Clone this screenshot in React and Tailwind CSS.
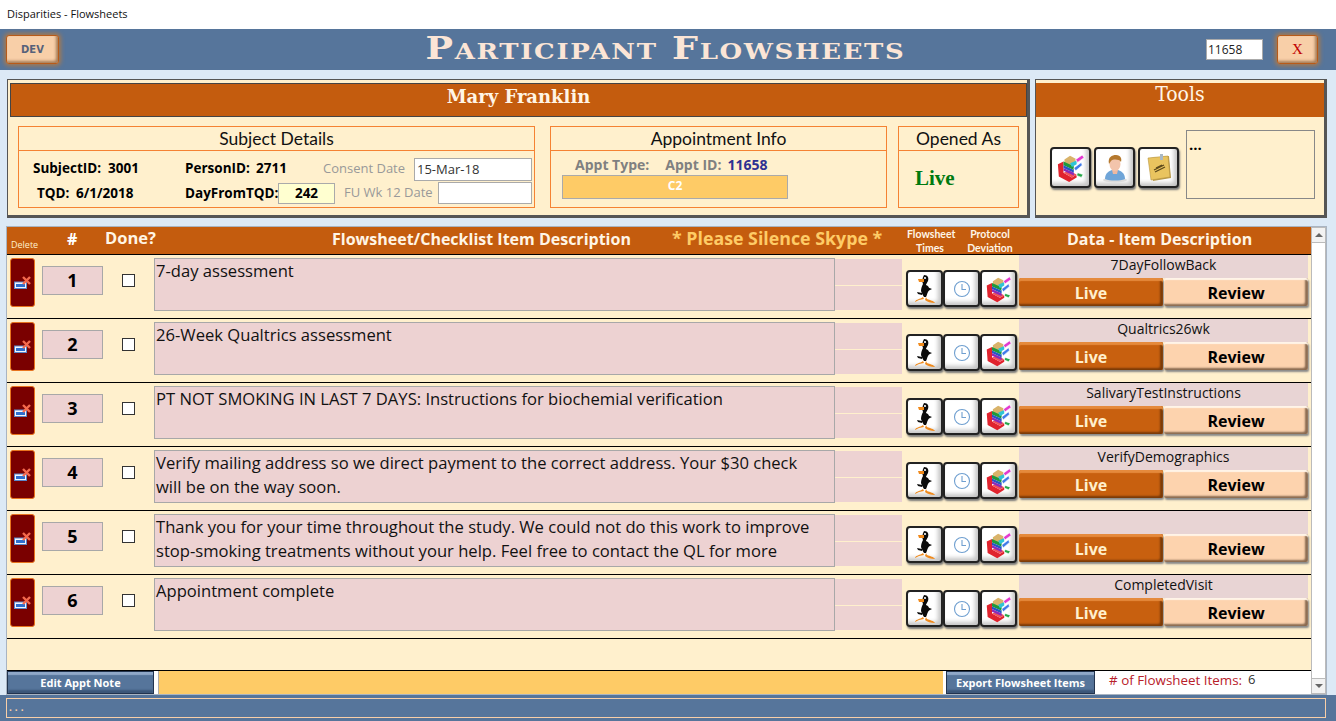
import React from "react";

/* ---------------- data ---------------- */

const ITEMS = [
  { n: 1, text: "7-day assessment", data: "7DayFollowBack" },
  { n: 2, text: "26-Week Qualtrics assessment", data: "Qualtrics26wk" },
  { n: 3, text: "PT NOT SMOKING IN LAST 7 DAYS: Instructions for biochemial verification", data: "SalivaryTestInstructions" },
  { n: 4, text: "Verify mailing address so we direct payment to the correct address. Your $30 check will be on the way soon.", data: "VerifyDemographics" },
  { n: 5, text: "Thank you for your time throughout the study. We could not do this work to improve stop-smoking treatments without your help. Feel free to contact the QL for more", data: "" },
  { n: 6, text: "Appointment complete", data: "CompletedVisit" },
];

/* ---------------- icons ---------------- */

const BooksIcon = ({ size = 28 }) => (
  <svg width={size} height={size} viewBox="0 0 32 32">
    <path d="M2 12 L8 9 L8 21 L17 26 L22 23 L22 26 L14 31 L3 25 Z" fill="#e0232e" />
    <path d="M8 21 L17 26 L22 23 L14 19 Z" fill="#f0505a" />
    <path d="M9 7 L15 3 L21 6 L21 11 L15 13 L9 11 Z" fill="#d9b36a" />
    <path d="M8 9 L19 14 L19 18 L8 13 Z" fill="#1f9a3c" />
    <path d="M8 13 L19 18 L19 21 L8 16 Z" fill="#2457c5" />
    <path d="M8 16 L19 21 L19 24 L8 19 Z" fill="#8a2bb8" />
    <path d="M15 11 L22 8 L22 12 L17 15 Z" fill="#2ec4d6" />
    <path d="M21 7 L28 2 L30 5 L23 10 Z" fill="#e23bd0" stroke="#fff" strokeWidth="0.7" />
    <path d="M19 16 L27 10 L28 13 L21 19 Z" fill="#3f7ae8" stroke="#fff" strokeWidth="0.7" />
    <path d="M23 21 L29 23 L27 26 L22 24 Z" fill="#27a84a" stroke="#fff" strokeWidth="0.7" />
  </svg>
);

const PersonIcon = () => (
  <svg width="28" height="30" viewBox="0 0 28 30">
    <ellipse cx="14" cy="27" rx="12" ry="2.5" fill="#dcdcdc" />
    <path d="M4 26 C4 20 8 18 11 17 L17 17 C20 18 24 20 24 26 C19 28 9 28 4 26 Z" fill="#6fa5d8" />
    <path d="M10.5 15 L17.5 15 L16 21 L12 21 Z" fill="#eeb8a0" />
    <ellipse cx="14" cy="11" rx="5.5" ry="7" fill="#f3c4ab" />
    <path d="M8 11 C6.5 4 11 2 15 2 C20 2 21 6 20 9 C18 6 12 6 10 8 Z" fill="#b5792e" />
  </svg>
);

const NotesIcon = () => (
  <svg width="28" height="30" viewBox="0 0 28 30">
    <path d="M5 5 L24 3 L26 25 L8 28 Z" fill="#b89a4c" />
    <path d="M3 5 L23 3 L25 24 L6 27 Z" fill="#e9c45f" stroke="#b8963f" strokeWidth="0.6" />
    <path d="M15 1 L18 1 L18 7 L15 7 Z" fill="#a9b8c4" />
    <path d="M9 17 L19 12 M10 19 L20 14 M11 15 L17 12" stroke="#5d4a1c" strokeWidth="1.3" />
  </svg>
);

const DuckIcon = () => (
  <svg width="24" height="30" viewBox="0 0 24 30">
    <path d="M11 1 C15 1 16 4 15 7 C14 9 13 10 13 11 C16 12 17 15 15 18 C14 20 14 21 13 23 L11 23 C10 21 9 20 8 17 C8 14 9 12 10 10 C9 8 9 4 11 1 Z" fill="#0b0b0b" />
    <circle cx="12" cy="4" r="1.1" fill="#fff" />
    <path d="M5 5 L11 5 L11 8 L6 8 Z" fill="#f08a1c" />
    <path d="M14 13 L19 15 L15 17 Z" fill="#0b0b0b" />
    <path d="M9 19 L4 18 L5 20 L9 21 Z" fill="#0b0b0b" />
    <path d="M10 23 L11 25 L6 26 L2 28 C2 26 6 25 8.5 24 Z" fill="#f08a1c" />
    <path d="M13 23 L14 25 C17 26 21 27 22 29 C18 29 14 28 12 26 Z" fill="#f08a1c" />
  </svg>
);

const ClockIcon = () => (
  <svg width="18" height="18" viewBox="0 0 18 18" fill="none" stroke="#6f9fd0" strokeWidth="1.1">
    <circle cx="9" cy="9" r="7.5" />
    <path d="M9 4 L9 9.5 L13 9.5" />
  </svg>
);

const DeleteIcon = () => (
  <svg width="18" height="14" viewBox="0 0 18 14">
    <rect x="0.5" y="6" width="12" height="6.5" fill="#f2f6fc" stroke="#5b86c8" />
    <rect x="2" y="8" width="9" height="3" fill="#2d6fd0" />
    <path d="M9 1 L16 8 M16 1 L9 8" stroke="#f56a4e" strokeWidth="2.4" />
  </svg>
);

/* ---------------- small pieces ---------------- */

const IconButton = ({ children, className = "w-[37px] h-[37px]" }) => (
  <div className={`${className} flex items-center justify-center bg-white rounded-[4px] border-2 border-[#222] shadow-[inset_-3px_-3px_4px_#c4c4c4,1px_2px_2px_#777]`}>
    {children}
  </div>
);

const BlueButton = ({ label, className }) => (
  <div className={`${className} h-[23px] flex items-center justify-center pt-[1px] bg-[#56759b] text-white font-['Open_Sans'] text-[11px] font-bold border border-[#22344f] shadow-[inset_0_3px_1px_#8fa8c8,inset_0_-3px_2px_#3c5678]`}>
    {label}
  </div>
);

const GroupBox = ({ title, className, children }) => (
  <div className={`${className} flex flex-col`}>
    <div className="h-[25px] pt-[1px] border border-[#f58233] flex items-center justify-center font-['Lato'] text-[17.5px] text-[#111]">
      {title}
    </div>
    <div className="h-[57px] border border-t-0 border-[#f58233] relative">{children}</div>
  </div>
);

const Row = ({ item }) => (
  <div className="h-[64px] border-t border-black flex items-start">
    <div className="ml-[3px] mt-[3px] w-[25px] h-[49px] bg-[#7a0000] border border-[#e8741e] rounded-[3px] flex items-center justify-center">
      <DeleteIcon />
    </div>
    <div className="ml-[7px] mt-[11px] w-[61px] h-[29px] bg-[#edd2d2] border border-[#a8a8a8] flex items-center justify-center font-['Open_Sans'] font-bold text-[18px] text-black">
      {item.n}
    </div>
    <div className="ml-[19px] mt-[19px] w-[13px] h-[13px] bg-white border border-[#333]" />
    <div className="ml-[19px] mt-[3px] w-[681px] h-[53px] bg-[#edd2d2] border border-[#a8a8a8] pl-[1px] pr-[14px] overflow-hidden font-['Open_Sans'] text-[16.6px] leading-[24px] text-[#111]">
      {item.text}
    </div>
    <div className="mt-[4px] w-[67px] h-[51px] flex flex-col">
      <div className="h-[27px] bg-[#edd2d2] border-b border-[#fff0cd]" />
      <div className="h-[24px] bg-[#edd2d2]" />
    </div>
    <div className="ml-[4px] mt-[15px] flex">
      <IconButton><DuckIcon /></IconButton>
      <IconButton><ClockIcon /></IconButton>
      <IconButton><BooksIcon /></IconButton>
    </div>
    <div className="ml-[2px] w-[289px] flex flex-col">
      <div className="h-[23px] pb-[4px] bg-[#e8d4d4] flex items-center justify-center font-['Open_Sans'] text-[14px] text-[#111]">
        {item.data}
      </div>
      <div className="flex gap-[1px]">
        <div className="w-[144px] h-[28px] pt-[2px] flex items-center justify-center bg-[#c8600f] text-[#fff0cd] font-['Open_Sans'] font-bold text-[16px] rounded-[2px] shadow-[inset_0_3px_1px_#e58a3c,inset_-3px_-2px_2px_#7a3a08,1px_2px_2px_#888]">
          Live
        </div>
        <div className="w-[144px] h-[28px] pt-[2px] flex items-center justify-center bg-[#fdd3ae] text-black font-['Open_Sans'] font-bold text-[16px] rounded-[2px] shadow-[inset_0_2px_1px_#fff4e8,inset_-3px_-2px_2px_#8a6a50,1px_2px_2px_#888]">
          Review
        </div>
      </div>
    </div>
  </div>
);

/* ---------------- page ---------------- */

export default function App() {
  return (
    <div className="w-[1336px] h-[721px] overflow-hidden flex flex-col bg-[#dce9f6] font-['Open_Sans',sans-serif]">
      {/* Title bar */}
      <div className="h-[29px] bg-white flex items-center pl-[7px] text-[11px] text-[#111] font-['Open_Sans']">
        Disparities - Flowsheets
      </div>

      {/* Header */}
      <div className="h-[41px] bg-[#56759b] flex items-center relative">
        <div className="ml-[6px] w-[53px] h-[29px] flex items-center justify-center bg-[#f8cfa8] border border-[#b85a18] rounded-[3px] shadow-[0_0_4px_2px_#a5794f,inset_-2px_-2px_3px_#a57c58] font-['DejaVu_Sans'] font-bold text-[10px] text-[#56617a]">
          DEV
        </div>
        <div className="flex-1 pl-[56px] pb-[3px] text-center font-['DejaVu_Serif'] font-bold text-[#fbe5d6] text-[31px] leading-none tracking-[1.4px] whitespace-nowrap [font-variant-caps:small-caps] scale-x-[1.18]">
          Participant Flowsheets
        </div>
        <div className="w-[57px] h-[21px] bg-white border border-[#aaa] flex items-center pl-[1px] font-['Open_Sans'] text-[12px] text-[#222]">
          11658
        </div>
        <div className="ml-[14px] mr-[18px] w-[41px] h-[29px] flex items-center justify-center bg-[#f8cfa8] border border-[#b85a18] rounded-[3px] shadow-[0_0_4px_2px_#a5794f,inset_-2px_-2px_3px_#a57c58] font-['Liberation_Serif'] text-[15px] text-[#c00000]">
          X
        </div>
      </div>

      {/* Top panels */}
      <div className="mt-[9px] ml-[7px] flex gap-[5px]">
        <div className="w-[1023px] h-[139px] bg-[#fff0cd] border border-[#555] border-r-[3px] border-b-[3px] pl-[2px] pt-[3px]">
          <div className="h-[34px] pb-[8px] bg-[#c45c0e] border border-[#444] flex items-center justify-center font-['DejaVu_Serif'] font-bold text-[#fff5e6] text-[18px]">
            Mary Franklin
          </div>
          <div className="mt-[9px] ml-[8px] flex">
            <GroupBox title="Subject Details" className="w-[517px]">
              <div className="font-['Open_Sans'] font-bold text-[13.5px] text-black">
                <div className="absolute left-[14px] top-[7px]">SubjectID:</div>
                <div className="absolute left-[89px] top-[7px]">3001</div>
                <div className="absolute left-[166px] top-[7px]">PersonID:</div>
                <div className="absolute left-[237px] top-[7px]">2711</div>
                <div className="absolute left-[18px] top-[32px]">TQD:</div>
                <div className="absolute left-[57px] top-[32px]">6/1/2018</div>
                <div className="absolute left-[166px] top-[32px]">DayFromTQD:</div>
                <div className="absolute left-[259px] top-[32px] w-[57px] h-[21px] bg-[#ffffd0] border border-[#aaa] flex items-center justify-center">242</div>
              </div>
              <div className="font-['Open_Sans'] text-[13px] text-[#999]">
                <div className="absolute left-[304px] top-[8px]">Consent Date</div>
                <div className="absolute left-[395px] top-[7px] w-[118px] h-[23px] bg-white border border-[#aaa] pl-[2px] flex items-center text-[#333]">15-Mar-18</div>
                <div className="absolute left-[325px] top-[32px]">FU Wk 12 Date</div>
                <div className="absolute left-[419px] top-[31px] w-[94px] h-[22px] bg-white border border-[#aaa]" />
              </div>
            </GroupBox>
            <GroupBox title="Appointment Info" className="w-[337px] ml-[15px]">
              <div className="flex items-center h-[24px] pl-[24px] pt-[2px] font-['Open_Sans'] font-bold text-[14px] text-[#808080]">
                <span>Appt Type:</span>
                <span className="ml-[16px]">Appt ID:</span>
                <span className="ml-[6px] text-[#2e3192]">11658</span>
              </div>
              <div className="ml-[11px] w-[226px] h-[24px] pb-[2px] bg-[#fecb66] border border-[#aaa] flex items-center justify-center font-['Open_Sans'] font-bold text-[12px] text-white">
                C2
              </div>
            </GroupBox>
            <GroupBox title="Opened As" className="w-[121px] ml-[11px]">
              <div className="h-full flex items-center pl-[16px] font-['Liberation_Serif'] font-bold text-[21px] text-[#007a10]">
                Live
              </div>
            </GroupBox>
          </div>
        </div>

        <div className="w-[292px] h-[139px] bg-[#fff0cd] border border-[#555] border-r-[3px] border-b-[3px] pt-[3px]">
          <div className="h-[34px] pb-[10px] bg-[#c45c0e] flex items-center justify-center font-['DejaVu_Serif_Condensed','DejaVu_Serif'] text-[#fff5e6] text-[21px]">
            Tools
          </div>
          <div className="flex items-start">
            <div className="ml-[14px] mt-[30px] flex gap-[3px]">
              <IconButton className="w-[41px] h-[41px]"><BooksIcon size={30} /></IconButton>
              <IconButton className="w-[41px] h-[41px]"><PersonIcon /></IconButton>
              <IconButton className="w-[41px] h-[41px]"><NotesIcon /></IconButton>
            </div>
            <div className="ml-[7px] mt-[13px] w-[129px] h-[69px] border border-[#888] pl-[2px] pt-[3px] font-['Open_Sans'] font-bold text-[15px] leading-[20px] text-black">
              ...
            </div>
          </div>
        </div>
      </div>

      {/* Flowsheet list */}
      <div className="mt-[8px] ml-[6px] w-[1321px] h-[469px] border border-[#a9b4c2] flex bg-[#fff0cd]">
        <div className="w-[1304px] flex flex-col">
          <div className="h-[27px] pb-[4px] bg-[#c45c0e] flex items-center text-white font-['Open_Sans'] font-bold relative">
            <span className="w-[38px] pl-[4px] pt-[13px] text-[9px] font-normal text-[#fff0cd]">Delete</span>
            <span className="ml-[22px] w-[10px] text-[16px]">#</span>
            <span className="ml-[28px] w-[52px] text-[16.5px] text-[#fff5e6]">Done?</span>
            <span className="ml-[175px] w-[302px] text-[16px] text-[#fff5e6] whitespace-nowrap">Flowsheet/Checklist Item Description</span>
            <span className="ml-[38px] w-[214px] text-[#fecb66] text-[17.8px] whitespace-nowrap">* Please Silence Skype *</span>
            <span className="ml-[21px] pt-[4px] w-[46px] font-['Lato'] text-[10.5px] leading-[14px] text-center text-[#fff5e6]">Flowsheet Times</span>
            <span className="ml-[12px] pt-[4px] w-[50px] font-['Lato'] text-[10.5px] leading-[14px] text-center text-[#fff5e6]">Protocol Deviation</span>
            <span className="ml-[52px] text-[16px] text-[#fff5e6] whitespace-nowrap">Data - Item Description</span>
          </div>

          {ITEMS.map((item) => (
            <Row key={item.n} item={item} />
          ))}

          <div className="h-[32px] border-t border-black" />

          <div className="h-[24px] border-t border-black flex bg-white">
            <BlueButton label="Edit Appt Note" className="w-[147px]" />
            <div className="ml-[4px] w-[785px] bg-[#fecb66] border-l border-[#aaa]" />
            <BlueButton label="Export Flowsheet Items" className="ml-[3px] w-[149px]" />
            <div className="ml-[14px] -mt-[1px] flex items-start font-['Open_Sans'] text-[13.4px]">
              <span className="text-[#b8202a]"># of Flowsheet Items:</span>
              <span className="ml-[6px] text-[13px] text-[#333]">6</span>
            </div>
          </div>
        </div>

        {/* Scrollbar */}
        <div className="w-[15px] bg-white border border-[#bbb] flex flex-col justify-between">
          <div className="h-[15px] bg-[#f2f2f2] border-b border-[#bbb] flex items-center justify-center">
            <div className="w-0 h-0 border-x-[4px] border-x-transparent border-b-[4px] border-b-[#666]" />
          </div>
          <div className="h-[15px] bg-[#f2f2f2] border-t border-[#bbb] flex items-center justify-center">
            <div className="w-0 h-0 border-x-[4px] border-x-transparent border-t-[4px] border-t-[#666]" />
          </div>
        </div>
      </div>

      {/* Status bar */}
      <div className="flex-1 bg-[#56759b] pt-[3px] px-[6px]">
        <div className="h-[20px] w-[1320px] border border-[#f8cfa8] pl-[2px] pt-[1px] font-['Open_Sans'] text-[10px] font-bold tracking-[3px] text-[#f8cfa8]">
          ...
        </div>
      </div>
    </div>
  );
}
